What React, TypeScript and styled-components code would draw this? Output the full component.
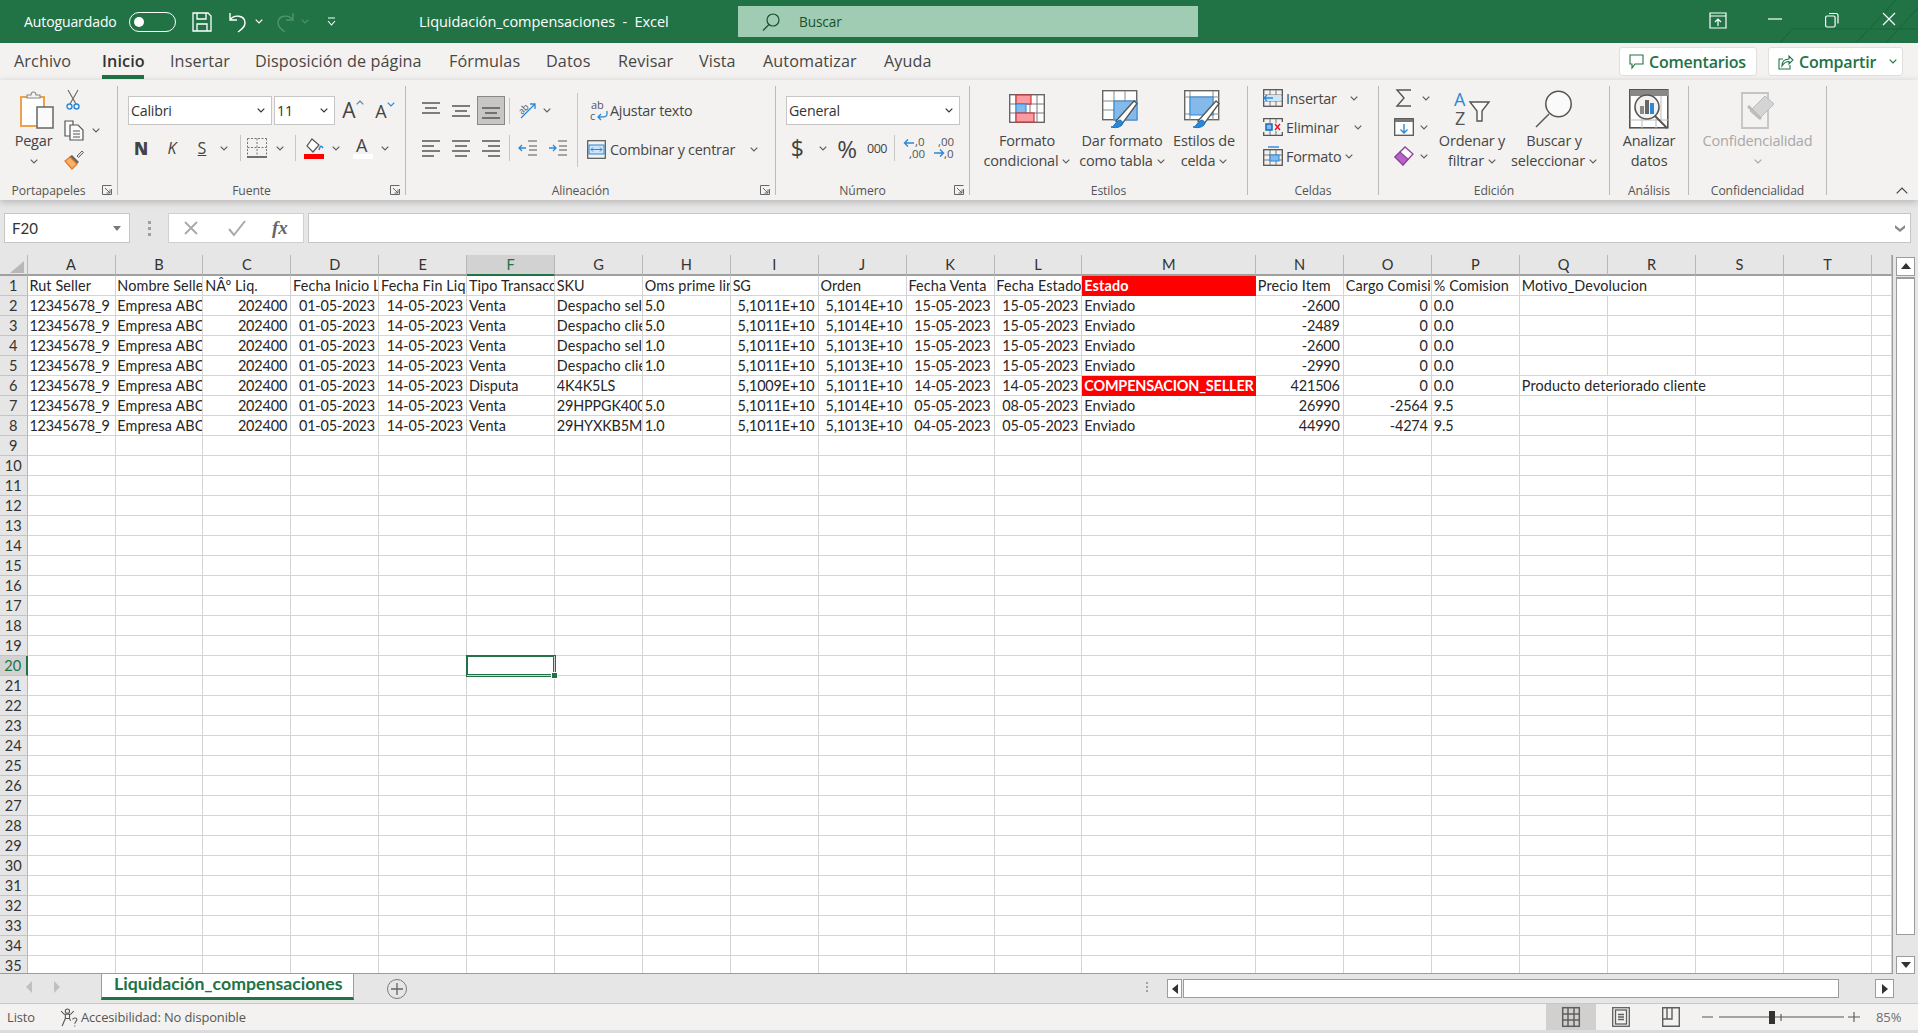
import React from 'react';
import styled, { createGlobalStyle } from 'styled-components';

const UI = '"Open Sans", "Liberation Sans", sans-serif';
const CELL = 'Lato, "Liberation Sans", sans-serif';
const GREEN = '#217346';

const Global = createGlobalStyle`
  html, body { margin: 0; padding: 0; background: #e6e6e6; overflow: hidden; }
  * { box-sizing: border-box; }
`;

const Page = styled.div`
  width: 1918px; height: 1033px; display: flex; flex-direction: column; overflow: hidden;
  font-family: ${UI}; color: #444; background: #e6e6e6;
`;

/* ---------- title bar ---------- */
const TitleBar = styled.header`
  position: relative; height: 43px; flex: none; background: ${GREEN}; color: #fff;
  display: flex; align-items: center; padding-left: 24px; font-size: 14px; letter-spacing: -0.1px;
`;
const AutoLabel = styled.span`width: 105px;`;
const Toggle = styled.span`
  width: 47px; height: 20px; border: 1.5px solid #fff; border-radius: 10px; display: flex; align-items: center; padding-left: 4px;
  &::before { content: ''; width: 10px; height: 10px; border-radius: 50%; background: #fff; }
`;
const QuickBtn = styled.span<{ $ml: number }>`margin-left: ${p => p.$ml}px; display: flex; align-items: center;`;
const DocTitle = styled.span`margin-left: 83px; width: 319px; white-space: pre; font-size: 14.5px; letter-spacing: -0.05px;`;
const SearchBox = styled.div`
  width: 460px; height: 31px; background: #a0ccb4; display: flex; align-items: center; padding-left: 24px;
  color: #14522f; font-size: 13.6px; gap: 19px;
`;
const WinControls = styled.div`position: absolute; right: 0; top: 0; height: 43px; z-index: 1;`;
const WinBtn = styled.span<{ $x: number }>`position: absolute; left: ${p => p.$x}px; top: 12px; display: block;`;
const Decor = styled.svg`position: absolute; right: 0; top: 0;`;

/* ---------- menu ---------- */
const MenuRow = styled.nav`
  height: 37px; flex: none; background: #f3f2f1; display: flex; align-items: flex-start; padding: 0 15px 0 14px; position: relative;
`;
const MenuTab = styled.span<{ $active?: boolean; $w: number }>`
  width: ${p => p.$w}px; height: 36px; line-height: 37px; font-size: 16.2px; white-space: nowrap; letter-spacing: 0.1px;
  color: ${p => (p.$active ? '#333' : '#484644')}; font-weight: ${p => (p.$active ? 600 : 400)};
  position: relative;
  ${p => p.$active && `&::after { content: ''; position: absolute; left: 0; bottom: 0; width: 42px; height: 4px; background: ${GREEN}; }`}
`;
const MenuSpacer = styled.span`flex: 1;`;
const CommentBtn = styled.button<{ $w: number; $ml?: number }>`
  width: ${p => p.$w}px; margin-left: ${p => p.$ml ?? 0}px; height: 29px; margin-top: 4px; border: 1px solid #e1dfdd; border-radius: 3px; background: #fff;
  color: ${GREEN}; font: 600 16px ${UI}; letter-spacing: -0.2px; display: flex; align-items: center; padding: 0 0 0 9px; gap: 5px;
`;

/* ---------- ribbon ---------- */
const Ribbon = styled.section`
  height: 120px; flex: none; background: #f3f2f1; display: flex; padding-top: 6px; position: relative; z-index: 2;
  box-shadow: 0 2px 7px rgba(0,0,0,.22); 
`;
const Group = styled.div<{ $w: number; $border?: boolean }>`
  width: ${p => p.$w}px; height: 109px; flex: none; display: flex; flex-direction: column;
  border-right: ${p => (p.$border === false ? 'none' : '1px solid #bdbbb9')};
`;
const GroupBody = styled.div<{ $pl?: number }>`height: 99px; display: flex; padding-left: ${p => p.$pl ?? 0}px;`;
const GroupFoot = styled.div`height: 10px; display: flex; align-items: center; font-size: 12.2px; color: #555; letter-spacing: -0.1px;`;
const GroupName = styled.span`flex: 1; text-align: center; white-space: nowrap;`;
const Launcher = styled.span`width: 20px; display: flex; justify-content: center;`;

const Column = styled.div<{ $w?: number; $gap?: number; $pt?: number; $pl?: number }>`
  display: flex; flex-direction: column; flex: none; width: ${p => (p.$w ? `${p.$w}px` : 'auto')};
  gap: ${p => p.$gap ?? 0}px; padding-top: ${p => p.$pt ?? 0}px; padding-left: ${p => p.$pl ?? 0}px;
`;
const Row = styled.div<{ $h?: number; $gap?: number }>`
  display: flex; align-items: center; height: ${p => p.$h ?? 28}px; gap: ${p => p.$gap ?? 0}px; flex: none;
`;
const Slot = styled.span<{ $w: number; $ml?: number; $on?: boolean; $h?: number }>`
  width: ${p => p.$w}px; margin-left: ${p => p.$ml ?? 0}px; height: ${p => (p.$h ? `${p.$h}px` : 'auto')}; flex: none;
  display: flex; align-items: center; justify-content: center; color: #444;
  ${p => p.$on && 'background: #c8c6c4; border: 1px solid #8a8886;'}
`;
const Sep = styled.span<{ $ml: number; $h?: number }>`
  width: 1px; height: ${p => p.$h ?? 26}px; background: #c8c6c4; margin-left: ${p => p.$ml}px; flex: none;
`;
const VSep = styled.span<{ $ml: number }>`
  width: 1px; height: 74px; margin-top: 7px; background: #c8c6c4; margin-left: ${p => p.$ml}px; flex: none;
`;
const Combo = styled.div<{ $w: number; $ml?: number }>`
  width: ${p => p.$w}px; height: 29px; margin-left: ${p => p.$ml ?? 0}px; background: #fff; border: 1px solid #c8c6c4; flex: none;
  display: flex; align-items: center; justify-content: space-between; padding: 0 6px 0 2px; font-size: 14.2px; color: #333; letter-spacing: -0.2px;
`;
const BigA = styled.span<{ $size: number }>`font: 400 ${p => p.$size}px ${UI}; color: #444; line-height: 1; display: flex; align-items: flex-start;`;
const StyleLetter = styled.span<{ $style: 'bold' | 'italic' | 'under' }>`
  font-size: 16px; color: #444; font-family: ${UI};
  ${p => p.$style === 'bold' && 'font-weight: 800; font-size: 17px;'}
  ${p => p.$style === 'italic' && 'font-style: italic;'}
  ${p => p.$style === 'under' && 'text-decoration: underline;'}
`;
const NumGlyph = styled.span<{ $size: number }>`font: 400 ${p => p.$size}px ${UI}; color: #444; letter-spacing: -0.5px;`;
const SmallAction = styled.span<{ $ml?: number }>`
  font-size: 14.4px; letter-spacing: -0.25px; color: #484644; margin-left: ${p => p.$ml ?? 0}px; white-space: nowrap;
`;
const BigButton = styled.div<{ $w: number; $ml?: number; $dim?: boolean }>`
  width: ${p => p.$w}px; margin-left: ${p => p.$ml ?? 0}px; flex: none; display: flex; flex-direction: column; align-items: center;
  color: ${p => (p.$dim ? '#a9a8a6' : '#484644')};
`;
const BigIcon = styled.div`height: 45px; display: flex; align-items: center; justify-content: center;`;
const BigText = styled.div`
  height: 20px; line-height: 20px; font-size: 14.5px; letter-spacing: -0.2px; white-space: nowrap; display: flex; align-items: center; gap: 4px;
`;
const PasteCol = styled.div`width: 37px; margin-left: 15px; display: flex; flex-direction: column; align-items: center; flex: none;`;
const PasteIcon = styled.div`height: 45px; width: 37px; display: flex; align-items: center; padding-left: 5px;`;
const Sv = styled.svg`display: block; flex: none; overflow: visible;`;

/* ---------- formula bar ---------- */
const FormulaBar = styled.div`
  height: 55px; flex: none; background: #e6e6e6; display: flex; padding: 13px 7px 0 4px; align-items: flex-start;
`;
const NameBox = styled.div`
  width: 126px; height: 30px; background: #fff; border: 1px solid #c6c6c6; display: flex; align-items: center; justify-content: space-between;
  padding: 0 8px 0 7px; font: 400 15px ${CELL}; color: #333;
`;
const Dots = styled.div`
  width: 38px; height: 30px; display: flex; flex-direction: column; align-items: center; justify-content: center; gap: 3px;
  & > i { width: 3px; height: 3px; background: #a0a0a0; display: block; }
`;
const FxBox = styled.div`
  width: 136px; height: 30px; background: #fff; border: 1px solid #d0d0d0; display: flex; align-items: center; padding-left: 14px; gap: 0;
`;
const FxMark = styled.span`font: italic 19px "Liberation Serif", serif; color: #666; margin-left: 26px; font-weight: 700;`;
const FormulaInput = styled.div`
  flex: 1; height: 30px; margin-left: 4px; background: #fff; border: 1px solid #c6c6c6; display: flex; align-items: center; justify-content: flex-end; padding-right: 5px;
`;

/* ---------- sheet ---------- */
const SheetArea = styled.div`height: 719px; flex: none; display: flex; background: #e6e6e6;`;
const SheetClip = styled.div`
  width: 1893px; height: 719px; overflow: hidden; flex: none; background: #fff; position: relative;
  border-right: 1px solid #9c9c9c; border-bottom: 1px solid #9c9c9c;
`;
const SheetGrid = styled.div<{ $cols: string }>`
  display: grid; grid-template-columns: ${p => p.$cols}; grid-template-rows: 21px 19.67px; grid-auto-rows: 20px;
  font: 400 14.4px ${CELL}; color: #262626;
`;
const Corner = styled.div`
  background: #e6e6e6; border-right: 1px solid #b8b8b8; border-bottom: 2px solid #a0a0a0; display: flex; align-items: flex-end; justify-content: flex-end; padding: 0 3px 1px 0;
`;
const ColHead = styled.div<{ $on?: boolean }>`
  background: ${p => (p.$on ? '#d2d2d2' : '#e6e6e6')};
  border-right: 1px solid #b8b8b8; border-bottom: 2px solid ${p => (p.$on ? GREEN : '#a0a0a0')};
  color: ${p => (p.$on ? '#217346' : '#333')}; text-align: center; line-height: 20px; font-size: 14.6px;
`;
const RowHead = styled.div<{ $on?: boolean }>`
  background: ${p => (p.$on ? '#d2d2d2' : '#e6e6e6')};
  border-right: ${p => (p.$on ? `2px solid ${GREEN}` : '1px solid #b8b8b8')}; border-bottom: 1px solid #c4c4c4;
  color: ${p => (p.$on ? '#217346' : '#333')}; text-align: center; line-height: 19px; font-size: 14.6px;
`;
const Cell = styled.div<{ $right?: boolean; $red?: boolean; $span?: number; $sel?: boolean; $tight?: boolean }>`
  position: relative;
  overflow: ${p => (p.$sel ? 'visible' : 'hidden')}; white-space: nowrap; line-height: 19px;
  padding: 0 ${p => (p.$right ? 3.2 : 0)}px 0 ${p => (p.$right ? 0 : 1.8)}px;
  text-align: ${p => (p.$right ? 'right' : 'left')};
  letter-spacing: ${p => (p.$tight ? '-0.14px' : '0.12px')};
  border-right: 1px solid #d4d4d4; border-bottom: 1px solid #d4d4d4;
  ${p => p.$span && `grid-column: span ${p.$span};`}
  ${p => p.$red && 'background: #ff0000; color: #fff; font-weight: 700; border-color: #ff0000;'}
  ${p => p.$sel && `box-shadow: 0 0 0 1px ${GREEN}, inset 0 0 0 1px ${GREEN}; z-index: 1;`}
`;
const Handle = styled.i`
  position: absolute; right: -4px; bottom: -4px; width: 7px; height: 7px; background: ${GREEN}; border: 1px solid #fff; display: block;
`;

const VScroll = styled.div`width: 25px; flex: none; display: flex; flex-direction: column; padding: 2px 0 0 3px;`;
const ScrollBtn = styled.div<{ $w?: number; $h?: number; $ml?: number }>`
  width: ${p => p.$w ?? 19}px; height: ${p => p.$h ?? 19}px; margin-left: ${p => p.$ml ?? 0}px; flex: none; background: #fff; border: 1px solid #9c9c9c; display: flex; align-items: center; justify-content: center;
`;
const VThumb = styled.div`width: 19px; height: 658px; margin-top: 1px; background: #fff; border: 1px solid #9c9c9c; border-top-width: 2px;`;
const VGap = styled.div`flex: 1;`;

/* ---------- tab bar ---------- */
const TabBar = styled.div`height: 29px; flex: none; background: #e6e6e6; display: flex; align-items: flex-start;`;
const NavArrows = styled.div`width: 101px; height: 26px; display: flex; align-items: center; padding-left: 26px; gap: 22px; flex: none;`;
const SheetTab = styled.div`
  width: 253px; height: 26px; background: #fff; border-left: 1px solid #9c9c9c; border-right: 1px solid #9c9c9c; border-bottom: 3px solid ${GREEN};
  color: ${GREEN}; font: 700 17.7px ${CELL}; padding-left: 12px; line-height: 20px; flex: none; white-space: nowrap;
`;
const AddSheet = styled.div`
  width: 20px; height: 20px; margin: 5px 0 0 33px; border: 1.5px solid #7a7a7a; border-radius: 50%; color: #555; display: flex; align-items: center; justify-content: center; flex: none;
`;
const TabDots = styled.div`
  margin-left: 739px; margin-top: 8px; width: 3px; display: flex; flex-direction: column; gap: 2px; flex: none;
  & > i { width: 2px; height: 2px; background: #a0a0a0; display: block; }
`;
const HScroll = styled.div`margin: 5px 0 0 18px; height: 19px; display: flex; flex: none;`;
const HThumb = styled.div`width: 656px; height: 19px; background: #fff; border: 1px solid #9c9c9c; margin-left: 1px;`;

/* ---------- status ---------- */
const StatusBar = styled.footer`
  height: 27px; flex: none; background: #f3f2f1; border-top: 1px solid #c8c8c8; display: flex; align-items: center; font-size: 12.9px; color: #555; padding-left: 7px; letter-spacing: -0.1px;
`;
const StatusAcc = styled.span`margin-left: 25px; display: flex; align-items: center; gap: 3px; width: 1486px; flex: none; white-space: nowrap;`;
const ViewBtn = styled.span<{ $on?: boolean; $w: number }>`
  width: ${p => p.$w}px; height: 26px; display: flex; align-items: center; justify-content: center; flex: none; background: ${p => (p.$on ? '#d2d0ce' : 'transparent')};
`;
const ZoomLabel = styled.span`margin-left: 14px; color: #6e6e6e; font-size: 13px;`;
const Bottom = styled.div`height: 3px; flex: 1; background: #dcdcdc;`;
const ZoomSlider = styled.svg`display: block; flex: none; margin-left: 6px;`;

/* ---------- icons ---------- */
const Chev = ({ c = '#605e5c', up }: { c?: string; up?: boolean }) => (
  <Sv width="8" height="5" viewBox="0 0 8 5"><path d={up ? 'M.7 4.300 4 1l3.300 3.300' : 'M.7.7 4 4 7.300.7'} fill="none" stroke={c} strokeWidth="1.200" /></Sv>
);
const Launch = () => (
  <Sv width="10" height="10" viewBox="0 0 10 10"><path d="M.5 9.500V.5h9M3 3l5 5M8 4.500V8H4.500M.5 9.500h9V4" fill="none" stroke="#666" strokeWidth="1" /></Sv>
);
const Save = () => (
  <Sv width="20" height="20" viewBox="0 0 20 20" fill="none" stroke="#fff" strokeWidth="1.300"><path d="M1 1h15l3 3v15H1z" /><path d="M5 1v6h9V1M5 19v-7h10v7" /></Sv>
);
const Undo = ({ c = '#fff' }: { c?: string }) => (
  <Sv width="20" height="22" viewBox="0 0 20 22" fill="none" stroke={c} strokeWidth="1.400"><path d="M2 2v7h7M2 9c4-6 15-5 15 3 0 4-3 6-7 9" /></Sv>
);
const Redo = () => (
  <Sv width="20" height="22" viewBox="0 0 20 22" fill="none" stroke="#4f9370" strokeWidth="1.400"><path d="M18 2v7h-7M18 9C14 3 3 4 3 12c0 4 3 6 7 9" /></Sv>
);
const Customize = () => (
  <Sv width="9" height="10" viewBox="0 0 9 10" fill="none" stroke="#fff" strokeWidth="1.100"><path d="M1 1h7M1 4l3.500 4L8 4" /></Sv>
);
const SearchGlyph = ({ c = '#14522f', w = 18 }: { c?: string; w?: number }) => (
  <Sv width={w} height={w} viewBox="0 0 18 18" fill="none" stroke={c} strokeWidth="1.200"><circle cx="11" cy="7" r="6" /><path d="M7 11.500 1 17.500" /></Sv>
);
const Paste = () => (
  <Sv width="34" height="38" viewBox="0 0 34 38">
    <rect x="1" y="7" width="23" height="29" fill="#fff" stroke="#eba24a" strokeWidth="2" />
    <path d="M7 8V5h4c0-4 5-4 5 0h4v3z" fill="#f3f2f1" stroke="#888" strokeWidth="1.100" />
    <rect x="17" y="17" width="16" height="21" fill="#fafafa" stroke="#666" strokeWidth="1.500" />
  </Sv>
);
const Cut = () => (
  <Sv width="14" height="20" viewBox="0 0 14 20" fill="none">
    <path d="M2 0l8 14M12 0 4 14" stroke="#666" strokeWidth="1.100" /><circle cx="3.500" cy="16.500" r="2.500" stroke="#2b88d8" strokeWidth="1.400" /><circle cx="10.500" cy="16.500" r="2.500" stroke="#2b88d8" strokeWidth="1.400" />
  </Sv>
);
const Copy = () => (
  <Sv width="20" height="20" viewBox="0 0 20 20" fill="#fafafa" stroke="#555" strokeWidth="1.200">
    <path d="M1 1h8v15H1z" /><path d="M6 5h8l5 5v10H6z" /><path d="M9 11h7M9 14h7M9 17h7" fill="none" />
  </Sv>
);
const Brush = () => (
  <Sv width="20" height="20" viewBox="0 0 20 20">
    <path d="M13 6l5-5 1.500 1.500-5 5z" fill="#ddd" stroke="#666" />
    <path d="M8 5l7 7-2 2L5 7z" fill="#666" />
    <path d="M6 7l7 7-5 5-7-8z" fill="#f6b26b" stroke="#e8761b" strokeWidth="1.200" />
  </Sv>
);
const Borders = () => (
  <Sv width="20" height="20" viewBox="0 0 20 20" fill="none" stroke="#777" strokeWidth="1"><path strokeDasharray="2 1.500" d="M.5.500h19M.500 .500v18M19.500.500v18M10 .500v18M.500 9.500h19" /><path d="M0 19h20" stroke="#444" strokeWidth="1.500" /></Sv>
);
const Fill = () => (
  <Sv width="20" height="21" viewBox="0 0 20 21">
    <path d="M8 1l7 6-6 7-6-6z" fill="#fff" stroke="#555" strokeWidth="1.200" />
    <path d="M15 12c1-4 2-5 4-2" fill="none" stroke="#2b88d8" strokeWidth="1.500" />
    <rect x="0" y="16" width="20" height="5" fill="#ff0000" />
  </Sv>
);
const Line = ({ d }: { d: string }) => (
  <Sv width="18" height="18" viewBox="0 0 18 18" fill="none" stroke="#555" strokeWidth="1.300"><path d={d} /></Sv>
);
const Orient = () => (
  <Sv width="20" height="20" viewBox="0 0 20 20" fill="none"><path d="M2 17 16 3M11 3h5v5" stroke="#2b88d8" strokeWidth="1.300" /><text x="0" y="11" fontFamily="Open Sans" fontSize="9" fill="#555" transform="rotate(-45 5 9)">ab</text></Sv>
);
const Wrap = () => (
  <Sv width="18" height="22" viewBox="0 0 18 22" fill="none"><text x="1" y="9" fontFamily="Open Sans" fontSize="11" fill="#555">ab</text><text x="0" y="20" fontFamily="Open Sans" fontSize="11" fill="#555">c</text><path d="M17 11v3c0 3-2 3-9 3M11 14l-3 3 3 3" stroke="#2b88d8" strokeWidth="1.300" /></Sv>
);
const Indent = ({ flip }: { flip?: boolean }) => (
  <Sv width="18" height="16" viewBox="0 0 18 16" fill="none"><path d="M9 1h9M10 6h8M10 10h8M9 15h9" stroke="#555" strokeWidth="1.200" />
    <path d={flip ? 'M0 8h7M4 5l3 3-3 3' : 'M7 8H0M3 5 0 8l3 3'} stroke="#2b88d8" strokeWidth="1.300" /></Sv>
);
const Merge = () => (
  <Sv width="19" height="19" viewBox="0 0 19 19" fill="none"><rect x=".7" y=".7" width="17.600" height="17.600" stroke="#555" strokeWidth="1.200" /><rect x="2" y="5" width="15" height="9" fill="#cfe4f7" stroke="#2b88d8" /><path d="M4 9.500h11M6 7.500 4 9.500l2 2M13 7.500l2 2-2 2" stroke="#2b88d8" /></Sv>
);
const Decimal = ({ more }: { more?: boolean }) => (
  <Sv width="20" height="22" viewBox="0 0 20 22" fill="none">
    <text x={more ? 4 : 11} y="9" fontFamily="Open Sans" fontSize="11.500" fill="#555">{more ? ',00' : ',0'}</text>
    <text x={more ? 10 : 5} y="21" fontFamily="Open Sans" fontSize="11.500" fill="#555">{more ? ',0' : ',00'}</text>
    <path d={more ? 'M0 16h9M6 12.500 9.500 16 6 19.500' : 'M10 6H1M4 2.500.5 6 4 9.500'} stroke="#2b88d8" strokeWidth="1.400" />
  </Sv>
);
const CondFormat = () => (
  <Sv width="36" height="29" viewBox="0 0 36 29" fill="none">
    <rect x=".7" y=".7" width="34.600" height="27.600" fill="#fff" stroke="#666" strokeWidth="1.400" />
    <path d="M7 1v27M21 1v27M28 1v27M1 10h34M1 19h34" stroke="#777" />
    <rect x="7" y="1" width="15" height="9" fill="#f99ba1" stroke="#d13438" strokeWidth="1.200" /><rect x="7" y="10" width="10" height="9" fill="#83bae9" stroke="#2b88d8" /><rect x="7" y="19" width="18" height="9" fill="#f99ba1" stroke="#d13438" strokeWidth="1.200" />
  </Sv>
);
const PaintBrush = () => (
  <g><path d="M14 31 32 11l3 2.500L20 34z" fill="#fff" stroke="#555" strokeWidth="1.300" /><path d="M9 37c4 0 4-6 9-7 3 1 3 4 2 5-3 3-7 3-11 2z" fill="#2b88d8" stroke="#1a6fb5" /></g>
);
const TableFormat = () => (
  <Sv width="40" height="38" viewBox="0 0 40 38" fill="none">
    <rect x=".7" y=".7" width="34" height="29" fill="#fff" stroke="#666" strokeWidth="1.400" />
    <path d="M12 1v29M23 1v29M1 11h34M1 20h34" stroke="#888" />
    <rect x="12" y="11" width="23" height="19" fill="#83bae9" stroke="#2b88d8" /><PaintBrush />
  </Sv>
);
const CellStyle = () => (
  <Sv width="40" height="38" viewBox="0 0 40 38" fill="none">
    <rect x=".7" y=".7" width="34" height="29" fill="#fff" stroke="#666" strokeWidth="1.400" />
    <path d="M6 1v29M29 1v29M1 7h34M1 24h34" stroke="#888" />
    <rect x="6" y="7" width="23" height="18" fill="#83bae9" stroke="#2b88d8" /><PaintBrush />
  </Sv>
);
const CellInsert = () => (
  <Sv width="20" height="18" viewBox="0 0 20 18" fill="none"><rect x=".7" y=".7" width="18.600" height="16.600" stroke="#555" strokeWidth="1.300" /><path d="M7 1v16M13 1v16M1 6h18M1 12h18" stroke="#777" /><rect x="1" y="6" width="17" height="6" fill="#cfe4f7" /><path d="M1 9h9M4 6 1 9l3 3" stroke="#2b88d8" strokeWidth="1.300" /></Sv>
);
const CellDelete = () => (
  <Sv width="20" height="18" viewBox="0 0 20 18" fill="none"><path d="M.7 4V.7h18.600V4M.7 14v3.300h18.600V14" stroke="#555" strokeWidth="1.300" /><path d="M7 1v4M7 13v4M13 1v4M13 13v4" stroke="#777" /><rect x="3" y="6" width="6" height="6" fill="#83bae9" stroke="#0f6cbd" strokeWidth="1.500" /><path d="M12 6l5 6M17 6l-5 6" stroke="#e81123" strokeWidth="1.400" /></Sv>
);
const CellFormat = () => (
  <Sv width="20" height="20" viewBox="0 0 20 20" fill="none"><rect x=".7" y="3.700" width="18.600" height="15.600" stroke="#555" strokeWidth="1.300" /><path d="M7 4v15M13 4v15M1 9h18M1 14h18" stroke="#777" /><rect x="7" y="9" width="9" height="6" fill="#83bae9" stroke="#2b88d8" /><path d="M5 1h11" stroke="#2b88d8" strokeWidth="1.400" /></Sv>
);
const Sigma = () => (
  <Sv width="16" height="18" viewBox="0 0 16 18" fill="none"><path d="M15 1H1l7 8-7 8h14" stroke="#555" strokeWidth="1.400" /></Sv>
);
const FillDown = () => (
  <Sv width="20" height="18" viewBox="0 0 20 18" fill="none"><rect x=".7" y=".7" width="18.600" height="16.600" fill="#fff" stroke="#555" strokeWidth="1.300" /><rect x="1" y="1" width="18" height="3" fill="#777" /><path d="M10 6v9M6.500 11.500 10 15l3.500-3.500" stroke="#2b88d8" strokeWidth="1.400" /></Sv>
);
const Eraser = () => (
  <Sv width="20" height="20" viewBox="0 0 20 20" fill="none"><path d="M1 11 11 1l8 7-10 11z" fill="#fff" stroke="#8e3f9e" strokeWidth="1.300" /><path d="M1 11l5-5 8 7-5 6z" fill="#b565c9" stroke="#8e3f9e" strokeWidth="1.100" /></Sv>
);
const Sort = () => (
  <Sv width="36" height="36" viewBox="0 0 36 36" fill="none">
    <text x="0" y="15" fontFamily="Open Sans" fontSize="18" fill="#2b88d8">A</text>
    <text x="1" y="34" fontFamily="Open Sans" fontSize="18" fill="#555">Z</text>
    <path d="M16 11h19l-7 9v10h-5V20z" fill="#fafafa" stroke="#555" strokeWidth="1.400" />
  </Sv>
);
const BigSearch = () => (
  <Sv width="38" height="38" viewBox="0 0 38 38" fill="none"><circle cx="23.500" cy="14" r="12.700" fill="#fafafa" stroke="#555" strokeWidth="1.500" /><path d="M14 24 1 37" stroke="#555" strokeWidth="1.500" /></Sv>
);
const Analyze = () => (
  <Sv width="40" height="40" viewBox="0 0 40 40" fill="none">
    <rect x=".8" y=".8" width="38" height="38" fill="#fff" stroke="#555" strokeWidth="1.600" /><rect x="1" y="1" width="38" height="6" fill="#888" />
    <path d="M13 30v9M27 30v9M1 31h38M32 7v24" stroke="#bbb" />
    <circle cx="18" cy="18" r="12" fill="#f3f2f1" stroke="#555" strokeWidth="1.600" />
    <path d="M26 27 38 39" stroke="#555" strokeWidth="2" />
    <rect x="11" y="17" width="4" height="8" fill="#888" /><rect x="16" y="11" width="4" height="14" fill="#666" /><rect x="21" y="14" width="4" height="11" fill="#2b88d8" />
  </Sv>
);
const Secure = () => (
  <Sv width="34" height="40" viewBox="0 0 34 40" fill="none">
    <path d="M1 4h26v35H1z" stroke="#c4c4c4" strokeWidth="1.800" fill="#f3f2f1" />
    <path d="M9 22 24 7l9 8-15 15z" fill="#d4d4d4" stroke="#bbb" /><path d="M7 17l13 13" stroke="#bbb" strokeWidth="3" />
  </Sv>
);
const Comment = () => (
  <Sv width="15" height="15" viewBox="0 0 15 15" fill="none"><path d="M1 1h13v9H6l-3 4v-4H1z" stroke={GREEN} strokeWidth="1.100" /></Sv>
);
const Share = () => (
  <Sv width="16" height="16" viewBox="0 0 16 16" fill="none"><path d="M5 5H1v10h11v-4" stroke={GREEN} strokeWidth="1.100" /><path d="M4 12c0-5 3-7 7-7V2l4 4-4 4V7.500c-3 0-5 1-7 4.500z" stroke={GREEN} strokeWidth="1.100" /></Sv>
);
const Access = () => (
  <Sv width="18" height="19" viewBox="0 0 17 18" fill="none" stroke="#555" strokeWidth="1"><circle cx="7" cy="3" r="2" /><path d="M1 3l3 3h6l3-3M5 6v4l-3 7M9 6v4M5 10h4l1 2" /><path d="M12 11c0-2 4-2 4 0s-2 2-2 4M14 16.500v1" /></Sv>
);
const X = () => (
  <Sv width="16" height="16" viewBox="0 0 16 16" fill="none" stroke="#a8a8a8" strokeWidth="1.800"><path d="M2 2l12 12M14 2 2 14" /></Sv>
);
const Check = () => (
  <Sv width="18" height="16" viewBox="0 0 18 16" fill="none" stroke="#a8a8a8" strokeWidth="2"><path d="M1 9l5 6L17 1" /></Sv>
);
const Tri = ({ d, c = '#333', w = 10, h = 7 }: { d: string; c?: string; w?: number; h?: number }) => (
  <Sv width={w} height={h} viewBox={`0 0 ${w} ${h}`}><path d={d} fill={c} /></Sv>
);
const NormalView = () => (
  <Sv width="18" height="20" viewBox="0 0 18 20" fill="none" stroke="#5e5e5e" strokeWidth="1.500"><rect x=".7" y=".7" width="16.600" height="18.600" /><path d="M6 1v18M12 1v18M1 7h16M1 13h16" /></Sv>
);
const LayoutView = () => (
  <Sv width="18" height="20" viewBox="0 0 18 20" fill="none" stroke="#5e5e5e" strokeWidth="1.300"><rect x=".7" y=".7" width="16.600" height="18.600" /><rect x="3.500" y="3" width="11" height="14" /><path d="M6 7.500h6M6 10h6M6 12.500h6" /></Sv>
);
const BreakView = () => (
  <Sv width="18" height="20" viewBox="0 0 18 20" fill="none" stroke="#5e5e5e" strokeWidth="1.400"><path d="M.7.700h16.600v18.600H.7z" /><path d="M1 12h9V1M5 1v11" /></Sv>
);

/* ---------- data ---------- */
const w = 87.92;
const colWidths = [27.6, ...Array(12).fill(w), 173.5, ...Array(7).fill(88), 19.9];
const colNames = 'ABCDEFGHIJKLMNOPQRST'.split('');
const D1 = '12345678_9', D2 = 'Empresa ABC', D3 = '202400', D4 = '01-05-2023', D5 = '14-05-2023';

type CellDef = { t: string; r?: boolean; red?: boolean; span?: number };
const L = (t: string, extra: Partial<CellDef> = {}): CellDef => ({ t, ...extra });
const R = (t: string): CellDef => ({ t, r: true });

const header: CellDef[] = [
  'Rut Seller', 'Nombre Seller', 'NÂº Liq.', 'Fecha Inicio Liq', 'Fecha Fin Liq', 'Tipo Transaccion', 'SKU', 'Oms prime line', 'SG', 'Orden', 'Fecha Venta', 'Fecha Estado',
].map(t => L(t)).concat([L('Estado', { red: true }), L('Precio Item'), L('Cargo Comision'), L('% Comision'), L('Motivo_Devolucion', { span: 2 }), L(''), L(''), L('')]);

const rowData: [string, string, string, string, string, string, string, string, string, string, string, string][] = [
  ['Venta', 'Despacho seller', '5.0', '5,1011E+10', '5,1014E+10', '15-05-2023', '15-05-2023', 'Enviado', '-2600', '0', '0.0', ''],
  ['Venta', 'Despacho cliente', '5.0', '5,1011E+10', '5,1014E+10', '15-05-2023', '15-05-2023', 'Enviado', '-2489', '0', '0.0', ''],
  ['Venta', 'Despacho seller', '1.0', '5,1011E+10', '5,1013E+10', '15-05-2023', '15-05-2023', 'Enviado', '-2600', '0', '0.0', ''],
  ['Venta', 'Despacho cliente', '1.0', '5,1011E+10', '5,1013E+10', '15-05-2023', '15-05-2023', 'Enviado', '-2990', '0', '0.0', ''],
  ['Disputa', '4K4K5LS', '', '5,1009E+10', '5,1011E+10', '14-05-2023', '14-05-2023', 'COMPENSACION_SELLER', '421506', '0', '0.0', 'Producto deteriorado cliente'],
  ['Venta', '29HPPGK4000', '5.0', '5,1011E+10', '5,1014E+10', '05-05-2023', '08-05-2023', 'Enviado', '26990', '-2564', '9.5', ''],
  ['Venta', '29HYXKB5MEE', '1.0', '5,1011E+10', '5,1013E+10', '04-05-2023', '05-05-2023', 'Enviado', '44990', '-4274', '9.5', ''],
];

const toRow = (d: (typeof rowData)[number]): CellDef[] => {
  const base: CellDef[] = [
    L(D1), L(D2), R(D3), R(D4), R(D5), L(d[0]), L(d[1]), L(d[2]), R(d[3]), R(d[4]), R(d[5]), R(d[6]),
    L(d[7], { red: d[7].startsWith('COMP') }), R(d[8]), R(d[9]), L(d[10]),
  ];
  if (d[11]) return [...base, L(d[11], { span: 3 }), L(''), L('')];
  return [...base, L(''), L(''), L(''), L(''), L('')];
};
const isTight = (t: string) => /^[A-Z0-9_.,+\-]+$/.test(t);

const Sheet = () => {
  const rows: React.ReactNode[] = [];
  for (let r = 1; r <= 35; r++) {
    const defs: CellDef[] =
      r === 1 ? header : r <= 8 ? toRow(rowData[r - 2]) : Array.from({ length: 21 }, () => L(''));
    rows.push(<RowHead key={`h${r}`} $on={r === 20}>{r}</RowHead>);
    defs.forEach((c, i) => {
      const sel = r === 20 && i === 5;
      rows.push(
        <Cell key={`${r}-${i}`} $right={c.r} $red={c.red} $span={c.span} $sel={sel} $tight={isTight(c.t)}>
          {c.t}
          {sel && <Handle />}
        </Cell>
      );
    });
  }
  return (
    <SheetGrid $cols={colWidths.map(x => `${x}px`).join(' ')}>
      <Corner><Tri d="M14 0v12H0z" c="#b8b8b8" w={14} h={12} /></Corner>
      {colNames.map(c => <ColHead key={c} $on={c === 'F'}>{c}</ColHead>)}
      <ColHead />
      {rows}
    </SheetGrid>
  );
};

const menu: [string, number][] = [
  ['Archivo', 88], ['Inicio', 68], ['Insertar', 85], ['Disposición de página', 194], ['Fórmulas', 97], ['Datos', 72], ['Revisar', 81], ['Vista', 64], ['Automatizar', 121], ['Ayuda', 60],
];

export default function App() {
  return (
    <>
      <Global />
      <Page>
        <TitleBar>
          <AutoLabel>Autoguardado</AutoLabel>
          <Toggle />
          <QuickBtn $ml={16}><Save /></QuickBtn>
          <QuickBtn $ml={16}><Undo /></QuickBtn>
          <QuickBtn $ml={7}><Chev c="#fff" /></QuickBtn>
          <QuickBtn $ml={12}><Redo /></QuickBtn>
          <QuickBtn $ml={6}><Chev c="#4f9370" /></QuickBtn>
          <QuickBtn $ml={18}><Customize /></QuickBtn>
          <DocTitle>Liquidación_compensaciones  -  Excel</DocTitle>
          <SearchBox><SearchGlyph /><span>Buscar</span></SearchBox>
          <Decor width="140" height="43" viewBox="0 0 140 43" fill="none" stroke="#1c6a3e" strokeWidth="1.500">
            <path d="M2 43 14 29h126M78 43 118 0M108 43 140 8" />
          </Decor>
          <WinControls>
            <WinBtn $x={-209}><Sv width="18" height="17" viewBox="0 0 18 17" fill="none" stroke="#fff" strokeWidth="1.200"><path d="M1 1h16v15H1zM1 4h16M9 14V7M6 10l3-3 3 3" /></Sv></WinBtn>
            <WinBtn $x={-150}><Sv width="14" height="14" viewBox="0 0 14 14" fill="none" stroke="#fff" strokeWidth="1.200"><path d="M0 7h14" /></Sv></WinBtn>
            <WinBtn $x={-93}><Sv width="14" height="16" viewBox="0 0 14 16" fill="none" stroke="#fff" strokeWidth="1.200"><rect x=".6" y="4" width="9.500" height="11" rx="1.500" /><path d="M4 1.500h7c1.500 0 2 1 2 2v8" /></Sv></WinBtn>
            <WinBtn $x={-36}><Sv width="14" height="14" viewBox="0 0 14 14" fill="none" stroke="#fff" strokeWidth="1.200"><path d="M1 1l12 12M13 1 1 13" /></Sv></WinBtn>
          </WinControls>
        </TitleBar>

        <MenuRow>
          {menu.map(([t, wd]) => <MenuTab key={t} $w={wd} $active={t === 'Inicio'}>{t}</MenuTab>)}
          <MenuSpacer />
          <CommentBtn $w={138}><Comment />Comentarios</CommentBtn>
          <CommentBtn $w={135} $ml={11}><Share />Compartir<Slot $w={8} $ml={8}><Chev c={GREEN} /></Slot></CommentBtn>
        </MenuRow>

        <Ribbon>
          <Group $w={118}>
            <GroupBody>
              <PasteCol>
                <PasteIcon><Paste /></PasteIcon>
                <BigText>Pegar</BigText>
                <Slot $w={10} $h={20}><Chev /></Slot>
              </PasteCol>
              <Column $pt={4} $gap={10} $pl={10}>
                <Row $h={20}><Slot $w={16} $ml={3}><Cut /></Slot></Row>
                <Row $h={20}><Slot $w={20} $ml={2}><Copy /></Slot><Slot $w={8} $ml={8}><Chev /></Slot></Row>
                <Row $h={20}><Slot $w={20} $ml={2}><Brush /></Slot></Row>
              </Column>
            </GroupBody>
            <GroupFoot><GroupName>Portapapeles</GroupName><Launcher><Launch /></Launcher></GroupFoot>
          </Group>

          <Group $w={288}>
            <GroupBody $pl={10}>
              <Column $pt={10} $gap={9}>
                <Row $h={29}>
                  <Combo $w={144}>Calibri<Chev c="#333" /></Combo>
                  <Combo $w={61} $ml={2}>11<Chev c="#333" /></Combo>
                  <Slot $w={26} $ml={5}><BigA $size={21}>A<Chev c="#5a7fa0" up /></BigA></Slot>
                  <Slot $w={26} $ml={6}><BigA $size={18}>A<Chev c="#2b88d8" /></BigA></Slot>
                </Row>
                <Row $h={28}>
                  <Slot $w={26}><StyleLetter $style="bold">N</StyleLetter></Slot>
                  <Slot $w={36}><StyleLetter $style="italic">K</StyleLetter></Slot>
                  <Slot $w={24}><StyleLetter $style="under">S</StyleLetter></Slot>
                  <Slot $w={20}><Chev /></Slot>
                  <Sep $ml={6} />
                  <Slot $w={32}><Borders /></Slot>
                  <Slot $w={14}><Chev /></Slot>
                  <Sep $ml={8} />
                  <Slot $w={36}><Fill /></Slot>
                  <Slot $w={8}><Chev /></Slot>
                  <Slot $w={36} $ml={5}>
                    <Sv width="20" height="22" viewBox="0 0 20 22"><text x="3" y="15" fontFamily="Open Sans" fontSize="18" fill="#444">A</text><rect x="0" y="17" width="20" height="5" fill="#fff" /></Sv>
                  </Slot>
                  <Slot $w={8}><Chev /></Slot>
                </Row>
              </Column>
            </GroupBody>
            <GroupFoot><GroupName>Fuente</GroupName><Launcher><Launch /></Launcher></GroupFoot>
          </Group>

          <Group $w={370}>
            <GroupBody $pl={16}>
              <Column $pt={10} $gap={9} $w={155}>
                <Row $h={29}>
                  <Slot $w={18}><Line d="M0 1h18M3 6h12M0 11h18" /></Slot>
                  <Slot $w={18} $ml={12}><Line d="M0 4h18M3 9h12M0 14h18" /></Slot>
                  <Slot $w={28} $ml={7} $on $h={29}><Line d="M0 6h18M3 11h12M0 16h18" /></Slot>
                  <Sep $ml={4} />
                  <Slot $w={20} $ml={9}><Orient /></Slot>
                  <Slot $w={8} $ml={4}><Chev /></Slot>
                </Row>
                <Row $h={28}>
                  <Slot $w={18}><Line d="M0 2h18M0 7h12M0 12h18M0 17h12" /></Slot>
                  <Slot $w={18} $ml={12}><Line d="M0 2h18M3 7h12M0 12h18M3 17h12" /></Slot>
                  <Slot $w={18} $ml={12}><Line d="M0 2h18M6 7h12M0 12h18M6 17h12" /></Slot>
                  <Sep $ml={9} />
                  <Slot $w={18} $ml={9}><Indent /></Slot>
                  <Slot $w={18} $ml={12}><Indent flip /></Slot>
                </Row>
              </Column>
              <VSep $ml={0} />
              <Column $pt={10} $gap={10}>
                <Row $h={29}><Slot $w={18} $ml={12}><Wrap /></Slot><SmallAction $ml={2}>Ajustar texto</SmallAction></Row>
                <Row $h={28}><Slot $w={19} $ml={9}><Merge /></Slot><SmallAction $ml={4}>Combinar y centrar</SmallAction><Slot $w={8} $ml={15}><Chev /></Slot></Row>
              </Column>
            </GroupBody>
            <GroupFoot><GroupName>Alineación</GroupName><Launcher><Launch /></Launcher></GroupFoot>
          </Group>

          <Group $w={194}>
            <GroupBody $pl={10}>
              <Column $pt={10} $gap={9}>
                <Combo $w={174}>General<Chev c="#333" /></Combo>
                <Row $h={28}>
                  <Slot $w={16} $ml={3}><NumGlyph $size={23}>$</NumGlyph></Slot>
                  <Slot $w={8} $ml={14}><Chev /></Slot>
                  <Slot $w={28} $ml={6}><NumGlyph $size={24}>%</NumGlyph></Slot>
                  <Slot $w={28} $ml={2}><NumGlyph $size={12.500}>000</NumGlyph></Slot>
                  <Sep $ml={3} />
                  <Slot $w={20} $ml={9}><Decimal /></Slot>
                  <Slot $w={20} $ml={10}><Decimal more /></Slot>
                </Row>
              </Column>
            </GroupBody>
            <GroupFoot><GroupName>Número</GroupName><Launcher><Launch /></Launcher></GroupFoot>
          </Group>

          <Group $w={278}>
            <GroupBody $pl={10}>
              <BigButton $w={94}>
                <BigIcon><CondFormat /></BigIcon>
                <BigText>Formato</BigText>
                <BigText>condicional<Chev /></BigText>
              </BigButton>
              <BigButton $w={92} $ml={2}>
                <BigIcon><TableFormat /></BigIcon>
                <BigText>Dar formato</BigText>
                <BigText>como tabla<Chev /></BigText>
              </BigButton>
              <BigButton $w={72}>
                <BigIcon><CellStyle /></BigIcon>
                <BigText>Estilos de</BigText>
                <BigText>celda<Chev /></BigText>
              </BigButton>
            </GroupBody>
            <GroupFoot><GroupName>Estilos</GroupName></GroupFoot>
          </Group>

          <Group $w={131}>
            <GroupBody $pl={15}>
              <Column $gap={5}>
                <Row $h={24}><CellInsert /><SmallAction $ml={3}>Insertar</SmallAction><Slot $w={8} $ml={13}><Chev /></Slot></Row>
                <Row $h={24}><CellDelete /><SmallAction $ml={3}>Eliminar</SmallAction><Slot $w={8} $ml={15}><Chev /></Slot></Row>
                <Row $h={24}><CellFormat /><SmallAction $ml={3}>Formato</SmallAction><Slot $w={8} $ml={4}><Chev /></Slot></Row>
              </Column>
            </GroupBody>
            <GroupFoot><GroupName>Celdas</GroupName></GroupFoot>
          </Group>

          <Group $w={231}>
            <GroupBody $pl={15}>
              <Column $gap={5} $w={44}>
                <Row $h={24}><Slot $w={16} $ml={2}><Sigma /></Slot><Slot $w={8} $ml={10}><Chev /></Slot></Row>
                <Row $h={24}><FillDown /><Slot $w={8} $ml={6}><Chev /></Slot></Row>
                <Row $h={24}><Eraser /><Slot $w={8} $ml={6}><Chev /></Slot></Row>
              </Column>
              <BigButton $w={68}>
                <BigIcon><Sort /></BigIcon>
                <BigText>Ordenar y</BigText>
                <BigText>filtrar<Chev /></BigText>
              </BigButton>
              <BigButton $w={96}>
                <BigIcon><BigSearch /></BigIcon>
                <BigText>Buscar y</BigText>
                <BigText>seleccionar<Chev /></BigText>
              </BigButton>
            </GroupBody>
            <GroupFoot><GroupName>Edición</GroupName></GroupFoot>
          </Group>

          <Group $w={79}>
            <GroupBody>
              <BigButton $w={78}>
                <BigIcon><Analyze /></BigIcon>
                <BigText>Analizar</BigText>
                <BigText>datos</BigText>
              </BigButton>
            </GroupBody>
            <GroupFoot><GroupName>Análisis</GroupName></GroupFoot>
          </Group>

          <Group $w={138}>
            <GroupBody>
              <BigButton $w={137} $dim>
                <BigIcon><Secure /></BigIcon>
                <BigText>Confidencialidad</BigText>
                <BigText><Chev c="#a9a8a6" /></BigText>
              </BigButton>
            </GroupBody>
            <GroupFoot><GroupName>Confidencialidad</GroupName></GroupFoot>
          </Group>

          <Group $w={92} $border={false}>
            <GroupBody />
            <GroupFoot>
              <GroupName />
              <Slot $w={14} $ml={0}><Sv width="12" height="7" viewBox="0 0 12 7" fill="none" stroke="#444" strokeWidth="1.200"><path d="M.7 6.300 6 1l5.300 5.300" /></Sv></Slot>
              <Slot $w={10} />
            </GroupFoot>
          </Group>
        </Ribbon>

        <FormulaBar>
          <NameBox>F20<Tri d="M0 0h8L4 5z" c="#777" w={8} h={5} /></NameBox>
          <Dots><i /><i /><i /></Dots>
          <FxBox><X /><Slot $w={18} $ml={29}><Check /></Slot><FxMark>fx</FxMark></FxBox>
          <FormulaInput><Tri d="M0 1l5 4 5-4v3L5 8 0 4z" c="#8a8a8a" w={10} h={8} /></FormulaInput>
        </FormulaBar>

        <SheetArea>
          <SheetClip><Sheet /></SheetClip>
          <VScroll>
            <ScrollBtn><Tri d="M5 0l5 6H0z" /></ScrollBtn>
            <VThumb />
            <VGap />
            <ScrollBtn $h={18}><Tri d="M0 0h10L5 6z" /></ScrollBtn>
          </VScroll>
        </SheetArea>

        <TabBar>
          <NavArrows>
            <Tri d="M6 0v12L0 6z" c="#c0c0c0" w={6} h={12} />
            <Tri d="M0 0v12l6-6z" c="#c0c0c0" w={6} h={12} />
          </NavArrows>
          <SheetTab>Liquidación_compensaciones</SheetTab>
          <AddSheet><Sv width="12" height="12" viewBox="0 0 12 12" fill="none" stroke="#666" strokeWidth="1.300"><path d="M6 0v12M0 6h12" /></Sv></AddSheet>
          <TabDots><i /><i /><i /></TabDots>
          <HScroll>
            <ScrollBtn $w={15}><Tri d="M6 0v10L0 5z" w={6} h={10} /></ScrollBtn>
            <HThumb />
            <ScrollBtn $ml={36}><Tri d="M0 0v10l6-5z" w={6} h={10} /></ScrollBtn>
          </HScroll>
        </TabBar>

        <StatusBar>
          <span>Listo</span>
          <StatusAcc><Access />Accesibilidad: No disponible</StatusAcc>
          <ViewBtn $w={50} $on><NormalView /></ViewBtn>
          <ViewBtn $w={50}><LayoutView /></ViewBtn>
          <ViewBtn $w={50}><BreakView /></ViewBtn>
          <ZoomSlider width="160" height="26" viewBox="0 0 160 26" fill="none" stroke="#555">
            <path d="M0 13h11M17 13h125M146 13h12M152 8v10M79 10v7" strokeWidth="1.100" />
            <rect x="67" y="7" width="6" height="13" fill="#333" stroke="none" />
          </ZoomSlider>
          <ZoomLabel>85%</ZoomLabel>
        </StatusBar>
        <Bottom />
      </Page>
    </>
  );
}
